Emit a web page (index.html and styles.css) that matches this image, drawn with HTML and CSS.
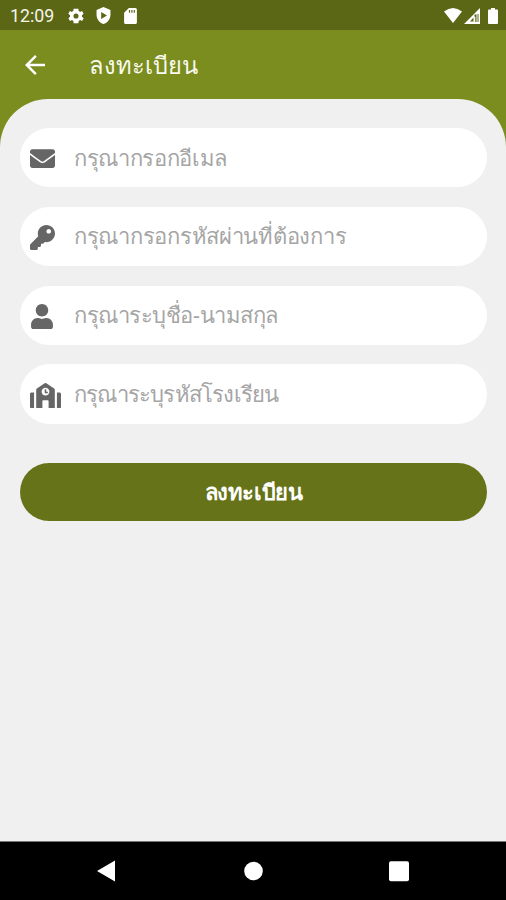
FILE: index.html
```html
<!DOCTYPE html>
<html lang="th">
<head>
<meta charset="utf-8">
<title>ลงทะเบียน</title>
<link rel="stylesheet" href="styles.css">
</head>
<body>
<div class="status">
  <span class="time">12:09</span>
  <svg class="gear" viewBox="2 2.500 20 19"><path fill-rule="evenodd" d="M19.400 13a7.500 7.500 0 0 0 0-2l2.100-1.700-2-3.400-2.500 1a7.500 7.500 0 0 0-1.700-1L15 3H9l-.4 2.900a7.500 7.500 0 0 0-1.700 1l-2.500-1-2 3.400L4.600 11a7.500 7.500 0 0 0 0 2l-2.100 1.700 2 3.400 2.500-1a7.500 7.500 0 0 0 1.700 1L9 21h6l.4-2.900a7.500 7.500 0 0 0 1.700-1l2.500 1 2-3.400zM12 15.200a3.200 3.200 0 1 1 0-6.400 3.200 3.200 0 0 1 0 6.400z"/></svg>
  <svg class="shield" viewBox="3 1 18 22"><path fill-rule="evenodd" d="M12 1 3 5v6c0 5.500 3.800 10.700 9 12 5.200-1.300 9-6.500 9-12V5zM9 7.500l7.500 4.500L9 16.500z"/></svg>
  <svg class="sd" viewBox="4 2 16 20"><path fill-rule="evenodd" d="M18 2h-8L4 8v12a2 2 0 0 0 2 2h12a2 2 0 0 0 2-2V4a2 2 0 0 0-2-2zM10 4.500h1.500V8H10zm3 0h1.500V8H13zm3 0h1.500V8H16z"/></svg>
  <span class="space"></span>
  <svg class="wifi" viewBox="0 0 18 15"><path d="M0 3.500Q9-3.500 18 3.500L9 15z"/></svg>
  <svg class="signal" viewBox="0 0 16 16"><path fill-rule="evenodd" d="M16 0v16H0zM14.500 6h-1v8h1zM12.500 6.500h-2v2.200h.8V14h1.200zM9.500 9.500 6 13.500h3.500z"/></svg>
  <svg class="battery" viewBox="0 0 10 16"><path d="M3 0h4v1.500h2a1 1 0 0 1 1 1V15a1 1 0 0 1-1 1H1a1 1 0 0 1-1-1V2.500a1 1 0 0 1 1-1h2z"/></svg>
</div>
<header class="bar">
  <svg class="back" viewBox="4 4 16 16"><path d="M20 11H7.800l5.600-5.600L12 4l-8 8 8 8 1.400-1.400L7.800 13H20z"/></svg>
  <h1>ลงทะเบียน</h1>
</header>
<main class="sheet">
  <form>
    <label class="field"><svg class="mail" viewBox="0 64 512 384"><path d="M502.300 190.800c3.900-3.100 9.700-.2 9.700 4.700V400c0 26.500-21.500 48-48 48H48c-26.500 0-48-21.500-48-48V195.600c0-5 5.700-7.800 9.700-4.700 22.400 17.400 52.100 39.500 154.100 113.600 21.100 15.400 56.700 47.800 92.200 47.600 35.700.3 72-32.800 92.300-47.600 102-74.100 131.600-96.300 154-113.700zM256 320c23.200.4 56.600-29.200 73.400-41.400 132.700-96.300 142.800-104.700 173.400-128.700 5.800-4.500 9.200-11.500 9.200-18.900v-19c0-26.500-21.500-48-48-48H48c-26.500 0-48 21.500-48 48v19c0 7.400 3.400 14.300 9.200 18.900 30.600 23.900 40.700 32.400 173.400 128.700 16.800 12.200 50.200 41.800 73.400 41.400z"/></svg><span class="email-hint">กรุณากรอกอีเมล</span></label>
    <label class="field"><svg class="key" viewBox="0 0 512 512"><path d="M512 176c0 97.200-78.800 176-176 176-11.200 0-22.200-1.100-32.800-3.100l-24 27a24 24 0 0 1-18 8.100H224v40c0 13.300-10.700 24-24 24h-40v40c0 13.300-10.700 24-24 24H24c-13.300 0-24-10.700-24-24v-78c0-6.400 2.500-12.500 7-17l161.800-161.800A176 176 0 0 1 160 176C160 78.800 238.800 0 336 0s176 78.500 176 176zM336 128c0 26.500 21.500 48 48 48s48-21.500 48-48-21.500-48-48-48-48 21.500-48 48z"/></svg><span class="password-hint">กรุณากรอกรหัสผ่านที่ต้องการ</span></label>
    <label class="field"><svg class="user" viewBox="0 0 448 512"><path d="M224 256c70.700 0 128-57.300 128-128S294.700 0 224 0 96 57.300 96 128s57.300 128 128 128zm89.600 32h-16.700a174 174 0 0 1-145.800 0h-16.700C60.200 288 0 348.200 0 422.400V464c0 26.500 21.500 48 48 48h352c26.500 0 48-21.500 48-48v-41.600c0-74.200-60.200-134.400-134.400-134.400z"/></svg><span class="name-hint">กรุณาระบุชื่อ-นามสกุล</span></label>
    <label class="field"><svg class="school" viewBox="0 0 640 512"><path d="M0 224v272c0 8.800 7.200 16 16 16h68V192H32c-17.700 0-32 14.300-32 32zm360-48h-24v-40c0-4.400-3.600-8-8-8h-16c-4.400 0-8 3.600-8 8v64c0 4.400 3.600 8 8 8h48c4.400 0 8-3.600 8-8v-16c0-4.400-3.600-8-8-8zm137.800-64-160-106.600a32 32 0 0 0-35.500 0l-160 106.600A32 32 0 0 0 128 138.600V512h128V368c0-8.800 7.200-16 16-16h96c8.800 0 16 7.200 16 16v144h128V138.700c0-10.700-5.300-20.800-14.200-26.700zM320 256c-44.200 0-80-35.800-80-80s35.800-80 80-80 80 35.800 80 80-35.800 80-80 80zm288-64h-52v320h68c8.800 0 16-7.200 16-16V224c0-17.700-14.300-32-32-32z"/></svg><span class="school-hint">กรุณาระบุรหัสโรงเรียน</span></label>
    <button type="button">ลงทะเบียน</button>
  </form>
</main>
<nav class="nav">
  <svg viewBox="0 0 22 22"><path d="M20 .5v21L2 11z"/></svg>
  <svg viewBox="0 0 22 22"><circle cx="11.500" cy="11" r="9.300"/></svg>
  <svg viewBox="0 0 22 22"><rect x="1" y="1.200" width="20" height="20" rx="2"/></svg>
</nav>
</body>
</html>
```
FILE: styles.css
```css
* { box-sizing: border-box; }
body {
  margin: 0;
  height: 900px;
  display: flex;
  flex-direction: column;
  overflow: hidden;
  font-family: "Liberation Sans", sans-serif;
  background: #7a8d1e;
}
svg { display: block; flex: none; fill: #fff; }
.status {
  height: 30px;
  flex: none;
  display: flex;
  align-items: center;
  padding: 1px 8px 0 10px;
  background: #5c6716;
}
.time { width: 58px; font: 17.800px/30px Roboto, sans-serif; color: #f4f5ea; }
.gear { width: 16px; height: 16px; }
.shield { width: 15px; height: 17px; margin-left: 12px; }
.sd { width: 13px; height: 16px; margin-left: 13px; }
.space { flex: 1; }
.wifi { width: 18px; height: 15px; }
.signal { width: 16px; height: 16px; margin-left: 2px; }
.battery { width: 10px; height: 16px; margin-left: 8px; }
.bar {
  height: 69px;
  flex: none;
  display: flex;
  align-items: center;
  padding-left: 25px;
}
.back { width: 20px; height: 20px; }
h1 {
  margin: 2px 0 0 44px;
  font-size: 23.700px;
  font-weight: 400;
  line-height: 40px;
  color: #f8f9ef;
}
.sheet {
  flex: 1;
  padding: 29px 19px 0 20px;
  border-radius: 48px 48px 0 0;
  background: #f0f0f0;
}
form { display: flex; flex-direction: column; gap: 19.500px; }
.field {
  height: 59.300px;
  display: flex;
  align-items: center;
  padding: 2px 0 0 10px;
  border-radius: 30px;
  background: #fff;
  color: #a5a5a5;
  font-size: 22px;
  white-space: nowrap;
}
.field svg { fill: #666; }
.field span { margin-left: auto; width: 413px; line-height: 40px; }
.field .email-hint { letter-spacing: -0.35px; }
.field .password-hint { letter-spacing: -0.27px; }
.field .name-hint { letter-spacing: -0.48px; }
.field .school-hint { letter-spacing: -0.8px; }
.mail { width: 25px; height: 19px; }
.key { width: 25px; height: 25px; }
.user { width: 22px; height: 25px; margin-left: 1px; }
.school { width: 31px; height: 25px; }
button {
  height: 58px;
  margin-top: 20px;
  padding: 2px 0 0;
  border: 0;
  border-radius: 29px;
  background: #667318;
  color: #fff;
  font: bold 22px/40px "Liberation Sans", sans-serif;
  letter-spacing: -0.4px;
}
.nav {
  height: 59px;
  flex: none;
  display: flex;
  justify-content: space-between;
  align-items: center;
  padding: 0 96px 0 95px;
  border-top: 1px solid #777;
  background: #000;
}
.nav svg { width: 22px; height: 22px; }
```
